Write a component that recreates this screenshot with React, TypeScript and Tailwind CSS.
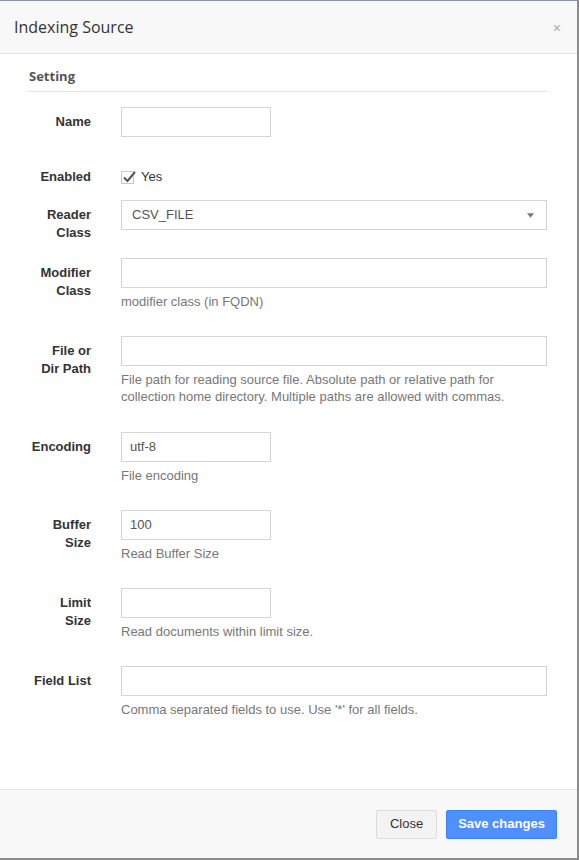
import React from "react";

const labelCls =
  "w-[64px] shrink-0 text-right pt-[6px] text-[13px] leading-[18px] font-bold text-[#333]";
const inputCls =
  "h-[30px] border border-[#d4d4d4] bg-white px-[8px] text-[13px] text-[#555] flex items-center";
const helpCls = "mt-[5px] text-[13px] leading-[17px] text-[#777]";

function Row({
  label,
  children,
  className = "",
}: {
  label: React.ReactNode;
  children: React.ReactNode;
  className?: string;
}) {
  return (
    <div className={"flex " + className}>
      <div className={labelCls}>{label}</div>
      <div className="ml-[30px] flex-1">{children}</div>
    </div>
  );
}

export default function App() {
  return (
    <div
      className="w-full h-[860px] flex flex-col border-t border-r-2 border-b-2 border-t-[#8a96a8] border-r-[#8c8c8c] border-b-[#8c8c8c] bg-white"
      style={{ fontFamily: '"Liberation Sans", Arial, sans-serif' }}
    >
      {/* header */}
      <div className="h-[53px] shrink-0 flex items-center justify-between bg-[#f8f8f8] border-b border-[#e5e5e5] pl-[14px] pr-[16px]">
        <h1 className="text-[16px] text-[#333]" style={{ fontFamily: '"Open Sans", sans-serif' }}>
          Indexing Source
        </h1>
        <button className="text-[14px] leading-none text-[#aaa] mt-[2px]">×</button>
      </div>

      {/* body */}
      <div className="flex-1 pl-[27px] pr-[30px]">
        <div
          className="pt-[12px] pb-[5px] pl-[2px] border-b border-[#e5e5e5] text-[13px] leading-[20px] font-bold text-[#555]"
          style={{ fontFamily: '"Open Sans", sans-serif' }}
        >
          Setting
        </div>

        <Row label="Name" className="mt-[15px]">
          <div className={inputCls + " w-[150px]"} />
        </Row>

        <div className="flex mt-[31px] h-[18px] items-center">
          <div className="w-[64px] shrink-0 text-right text-[13px] leading-[18px] font-bold text-[#333]">
            Enabled
          </div>
          <div className="ml-[30px] flex items-center gap-[7px] text-[13px] text-[#333]">
            <span className="relative w-[13px] h-[13px] border border-[#c8c8c8] bg-white">
              <svg
                viewBox="0 0 14 14"
                className="absolute left-[0px] top-[-2px] w-[14px] h-[14px]"
                fill="none"
                stroke="#555"
                strokeWidth="2"
              >
                <path d="M2 7.5 L5.5 11 L13 2" />
              </svg>
            </span>
            Yes
          </div>
        </div>

        <Row
          label={
            <>
              Reader
              <br />
              Class
            </>
          }
          className="mt-[14px]"
        >
          <div className={inputCls + " justify-between pl-[10px] pr-[12px]"}>
            <span>CSV_FILE</span>
            <svg viewBox="0 0 8 5" className="w-[7px] h-[5px]">
              <path d="M0 0 H8 L4 5 Z" fill="#777" />
            </svg>
          </div>
        </Row>

        <Row
          label={
            <>
              Modifier
              <br />
              Class
            </>
          }
          className="mt-[16px]"
        >
          <div className={inputCls} />
          <div className={helpCls}>modifier class (in FQDN)</div>
        </Row>

        <Row
          label={
            <>
              File or
              <br />
              Dir Path
            </>
          }
          className="mt-[26px]"
        >
          <div className={inputCls} />
          <div className={helpCls}>
            File path for reading source file. Absolute path or relative path for
            <br />
            collection home directory. Multiple paths are allowed with commas.
          </div>
        </Row>

        <Row label="Encoding" className="mt-[27px]">
          <div className={inputCls + " w-[150px]"}>utf-8</div>
          <div className={helpCls}>File encoding</div>
        </Row>

        <Row
          label={
            <>
              Buffer
              <br />
              Size
            </>
          }
          className="mt-[26px]"
        >
          <div className={inputCls + " w-[150px]"}>100</div>
          <div className={helpCls}>Read Buffer Size</div>
        </Row>

        <Row
          label={
            <>
              Limit
              <br />
              Size
            </>
          }
          className="mt-[26px]"
        >
          <div className={inputCls + " w-[150px]"} />
          <div className={helpCls}>Read documents within limit size.</div>
        </Row>

        <Row label="Field List" className="mt-[26px]">
          <div className={inputCls} />
          <div className={helpCls}>Comma separated fields to use. Use '*' for all fields.</div>
        </Row>
      </div>

      {/* footer */}
      <div className="h-[69px] shrink-0 border-t border-[#e5e5e5] bg-[#f8f8f8] flex items-center justify-end gap-[9px] pr-[20px]">
        <button className="h-[29px] w-[61px] rounded-[2px] border border-[#dcdcdc] bg-[#f3f3f3] text-[13px] text-[#333]">
          Close
        </button>
        <button className="h-[29px] w-[111px] rounded-[2px] border border-[#3b83f0] bg-[#4d90fe] text-[13px] font-bold text-white">
          Save changes
        </button>
      </div>
    </div>
  );
}
